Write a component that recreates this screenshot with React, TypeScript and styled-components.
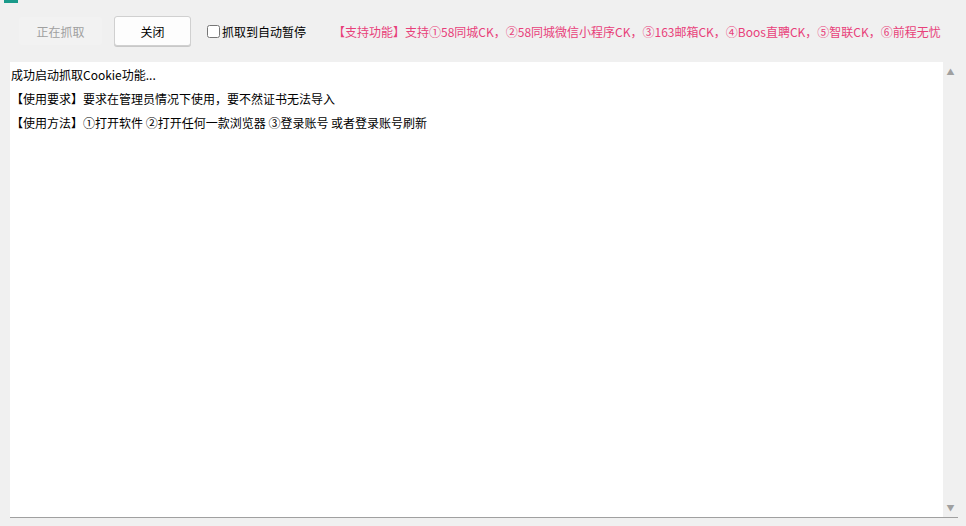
import React from "react"
import styled, { createGlobalStyle } from "styled-components"

const Global = createGlobalStyle`
	body { margin: 0; background: #f0f0f0; font-family: "Noto Sans CJK SC", sans-serif; }
`

const Window = styled.div`
	width: 966px;
	height: 526px;
	box-sizing: border-box;
	display: flex;
	flex-direction: column;
	border-top: 3px solid #f0f0f0;
	position: relative;
`

const Mark = styled.div`
	position: absolute;
	left: 4px;
	top: -3px;
	width: 14px;
	height: 3px;
	background: #1a9a8a;
`

const Toolbar = styled.div`
	display: flex;
	align-items: center;
	height: 30px;
	margin: 13px 0 16px 18px;
	gap: 11px;
`

const Button = styled.button<{ $disabled?: boolean }>`
	width: ${p => (p.$disabled ? "85px" : "77px")};
	height: 30px;
	border-radius: 3px;
	font-family: inherit;
	font-size: 12px;
	border: 1px solid ${p => (p.$disabled ? "#f0f0f0" : "#d0d0d0")};
	background: ${p => (p.$disabled ? "#f2f2f2" : "#fdfdfd")};
	color: ${p => (p.$disabled ? "#a0a0a0" : "#000")};
	box-shadow: ${p => (p.$disabled ? "none" : "0 1px 0 #c8c8c8")};
`

const Check = styled.label`
	display: flex;
	align-items: center;
	gap: 2px;
	font-size: 12px;
	margin-left: 5px;
	input { margin: 0; width: 13px; height: 13px; }
`

const Notice = styled.span`
	font-size: 12px;
	color: #e8407a;
	margin-left: 16px;
`

const LogArea = styled.div`
	margin-left: 10px;
	width: 948px;
	flex: 1;
	margin-bottom: 8px;
	background: #fff;
	border-bottom: 1px solid #a0a0a0;
	display: flex;
`

const Lines = styled.div`
	flex: 1;
	padding: 1px 0 0 1px;
	font-size: 12px;
	line-height: 24px;
	color: #000;
`

const ScrollBar = styled.div`
	width: 15px;
	background: #f0f0f0;
	display: flex;
	flex-direction: column;
	justify-content: space-between;
	align-items: center;
	padding: 4px 0;
	color: #a0a0a0;
	font-size: 8px;
`

export default function App() {
	return (
		<>
			<Global />
			<Window>
				<Mark />
				<Toolbar>
					<Button $disabled>正在抓取</Button>
					<Button>关闭</Button>
					<Check>
						<input type="checkbox" />
						抓取到自动暂停
					</Check>
					<Notice>【支持功能】支持①58同城CK，②58同城微信小程序CK，③163邮箱CK，④Boos直聘CK，⑤智联CK，⑥前程无忧</Notice>
				</Toolbar>
				<LogArea>
					<Lines>
						<div>成功启动抓取Cookie功能...</div>
						<div>【使用要求】要求在管理员情况下使用，要不然证书无法导入</div>
						<div>【使用方法】①打开软件 ②打开任何一款浏览器 ③登录账号 或者登录账号刷新</div>
					</Lines>
					<ScrollBar>
						<span>▲</span>
						<span>▼</span>
					</ScrollBar>
				</LogArea>
			</Window>
		</>
	)
}
